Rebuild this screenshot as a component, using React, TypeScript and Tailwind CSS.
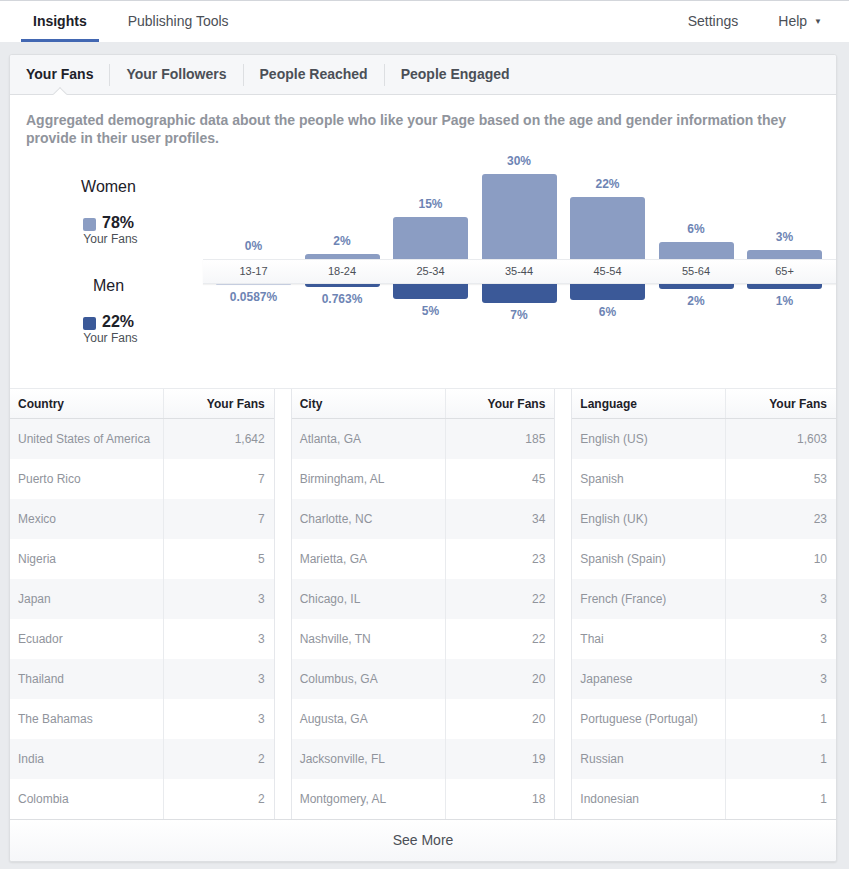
import React from 'react';

type Age = { label: string; women: string; wh: number; men: string; mh: number; thin?: boolean };

const ages: Age[] = [
  { label: '13-17', women: '0%', wh: 0, men: '0.0587%', mh: 1, thin: true },
  { label: '18-24', women: '2%', wh: 5, men: '0.763%', mh: 3 },
  { label: '25-34', women: '15%', wh: 42, men: '5%', mh: 15 },
  { label: '35-44', women: '30%', wh: 85, men: '7%', mh: 19 },
  { label: '45-54', women: '22%', wh: 62, men: '6%', mh: 16 },
  { label: '55-64', women: '6%', wh: 17, men: '2%', mh: 5 },
  { label: '65+', women: '3%', wh: 9, men: '1%', mh: 5 },
];

const tables = [
  {
    title: 'Country',
    rows: [
      ['United States of America', '1,642'],
      ['Puerto Rico', '7'],
      ['Mexico', '7'],
      ['Nigeria', '5'],
      ['Japan', '3'],
      ['Ecuador', '3'],
      ['Thailand', '3'],
      ['The Bahamas', '3'],
      ['India', '2'],
      ['Colombia', '2'],
    ],
  },
  {
    title: 'City',
    rows: [
      ['Atlanta, GA', '185'],
      ['Birmingham, AL', '45'],
      ['Charlotte, NC', '34'],
      ['Marietta, GA', '23'],
      ['Chicago, IL', '22'],
      ['Nashville, TN', '22'],
      ['Columbus, GA', '20'],
      ['Augusta, GA', '20'],
      ['Jacksonville, FL', '19'],
      ['Montgomery, AL', '18'],
    ],
  },
  {
    title: 'Language',
    rows: [
      ['English (US)', '1,603'],
      ['Spanish', '53'],
      ['English (UK)', '23'],
      ['Spanish (Spain)', '10'],
      ['French (France)', '3'],
      ['Thai', '3'],
      ['Japanese', '3'],
      ['Portuguese (Portugal)', '1'],
      ['Russian', '1'],
      ['Indonesian', '1'],
    ],
  },
];

const FanTable = ({ title, rows, idx }: { title: string; rows: string[][]; idx: number }) => (
  <div
    className={`${idx > 0 ? 'border-l border-[#e5e7eb]' : ''} ${idx < 2 ? 'border-r border-[#e5e7eb]' : ''}`}
  >
    <div className="grid grid-cols-[153px_1fr] h-[30px] bg-gradient-to-b from-white to-[#f6f7f9] border-b border-[#dddfe2] text-[12px] font-bold text-[#1d2129]">
      <div className="flex items-center pl-[8px]">{title}</div>
      <div className="flex items-center justify-end pr-[9px] border-l border-[#e9ebee]">Your Fans</div>
    </div>
    {rows.map((r, i) => (
      <div
        key={r[0]}
        className={`grid grid-cols-[153px_1fr] h-[40px] text-[12px] text-[#90949c] ${i % 2 === 0 ? 'bg-[#f6f7f9]' : 'bg-white'}`}
      >
        <div className="flex items-center pl-[8px]">{r[0]}</div>
        <div className="flex items-center justify-end pr-[9px] border-l border-[#e9ebee]">{r[1]}</div>
      </div>
    ))}
  </div>
);

export default function App() {
  return (
    <div
      className="min-h-[869px] bg-[#e9ebee]"
      style={{ fontFamily: '"Liberation Sans", Arial, Helvetica, sans-serif' }}
    >
      {/* top nav */}
      <div className="h-[42px] bg-white border-t border-[#d3d6db] flex items-stretch pl-[21px] pr-[14px] text-[14px]">
        <div className="relative flex items-center px-[12px] font-bold text-[#1d2129]">
          Insights
          <div className="absolute left-0 right-0 bottom-0 h-[3px] bg-[#4267b2]" />
        </div>
        <div className="flex items-center ml-[16px] px-[13px] text-[#4b4f56]">Publishing Tools</div>
        <div className="flex-1" />
        <div className="flex items-center px-[13px] text-[#4b4f56]">Settings</div>
        <div className="flex items-center ml-[14px] px-[13px] text-[#4b4f56]">
          Help
          <span className="ml-[7px] text-[8px]">▼</span>
        </div>
      </div>

      <div className="pt-[12px] pl-[9px] pr-[12px] pb-[9px]">
        <div className="bg-white border border-[#dddfe2] rounded-[3px] shadow-[0_1px_2px_rgba(0,0,0,0.08)] overflow-hidden">
          {/* sub tabs */}
          <div className="relative h-[40px] bg-[#f6f7f9] border-b border-[#dddfe2] flex items-center text-[14px] font-bold text-[#4b4f56]">
            <div className="relative px-[16px] text-[#1d2129]">
              Your Fans
              <div className="absolute left-1/2 -translate-x-1/2 top-[25px] w-[10px] h-[10px] rotate-45 bg-white border-l border-t border-[#dddfe2]" />
            </div>
            <div className="w-px h-[22px] bg-[#dddfe2]" />
            <div className="px-[16px]">Your Followers</div>
            <div className="w-px h-[22px] bg-[#dddfe2]" />
            <div className="px-[16px]">People Reached</div>
            <div className="w-px h-[22px] bg-[#dddfe2]" />
            <div className="px-[16px]">People Engaged</div>
          </div>

          {/* description */}
          <div className="pt-[16px] pl-[16px] pr-[40px] text-[14px] leading-[18px] font-bold text-[#90949c]">
            Aggregated demographic data about the people who like your Page based on the age and gender information they provide in their user profiles.
          </div>

          {/* chart */}
          <div className="flex h-[241px]">
            <div className="w-[193px] flex flex-col items-center pl-[4px]">
              <div className="mt-[30px] text-[16px] leading-[20px] text-[#1d2129]">Women</div>
              <div className="mt-[18px] flex items-center h-[16px]">
                <div className="w-[13px] h-[13px] rounded-[2px] bg-[#8b9dc3] mr-[6px] mt-[3px]" />
                <span className="text-[16px] leading-[16px] font-bold text-[#1d2129]">78%</span>
              </div>
              <div className="mt-[1px] text-[12px] leading-[14px] text-[#4b4f56] pl-[4px]">Your Fans</div>
              <div className="mt-[30px] text-[16px] leading-[20px] text-[#1d2129]">Men</div>
              <div className="mt-[18px] flex items-center h-[16px]">
                <div className="w-[13px] h-[13px] rounded-[2px] bg-[#3b5998] mr-[6px] mt-[3px]" />
                <span className="text-[16px] leading-[16px] font-bold text-[#1d2129]">22%</span>
              </div>
              <div className="mt-[1px] text-[12px] leading-[14px] text-[#4b4f56] pl-[4px]">Your Fans</div>
            </div>

            <div className="flex-1 flex flex-col">
              <div className="h-[112px] flex items-end gap-[13.5px] px-[13px]">
                {ages.map(a => (
                  <div key={a.label} className="w-[75px] flex flex-col items-center">
                    <div className="text-[12px] leading-[14px] font-bold text-[#6d84b4] mb-[6px]">{a.women}</div>
                    <div
                      className="w-full bg-[#8b9dc3] rounded-t-[3px]"
                      style={{ height: a.wh }}
                    />
                  </div>
                ))}
              </div>
              <div className="h-[25px] flex gap-[13.5px] px-[13px] bg-gradient-to-b from-white to-[#f6f7f9] border-y border-[#e9ebee] shadow-[0_1px_1px_rgba(0,0,0,0.05)]">
                {ages.map(a => (
                  <div key={a.label} className="w-[75px] flex items-center justify-center text-[11px] text-[#4b4f56]">
                    {a.label}
                  </div>
                ))}
              </div>
              <div className="flex items-start gap-[13.5px] px-[13px]">
                {ages.map(a => (
                  <div key={a.label} className="w-[75px] flex flex-col items-center">
                    <div
                      className={`w-full rounded-b-[3px] ${a.thin ? 'bg-[#c5cddf]' : 'bg-[#3b5998]'}`}
                      style={{ height: a.mh }}
                    />
                    <div className="text-[12px] leading-[14px] font-bold text-[#6d84b4] mt-[5px]">{a.men}</div>
                  </div>
                ))}
              </div>
            </div>
          </div>

          {/* tables */}
          <div className="grid grid-cols-3 gap-[16px] border-t border-[#e9ebee]">
            {tables.map((t, i) => (
              <FanTable key={t.title} title={t.title} rows={t.rows} idx={i} />
            ))}
          </div>

          <div className="h-[42px] border-t border-[#dddfe2] bg-gradient-to-b from-white to-[#f6f7f9] flex items-center justify-center text-[14px] text-[#4b4f56]">
            See More
          </div>
        </div>
      </div>
    </div>
  );
}
